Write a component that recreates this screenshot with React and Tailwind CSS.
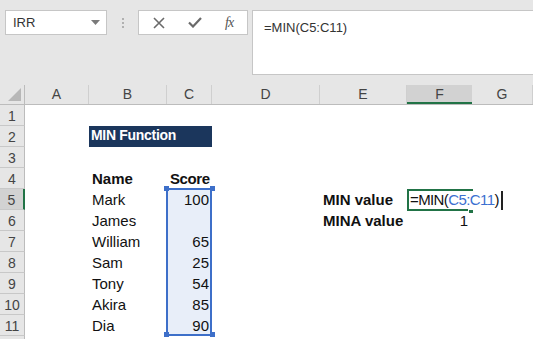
import React from "react";

const rows = [
  { n: 1 },
  { n: 2, title: "MIN Function" },
  { n: 3 },
  { n: 4, b: "Name", c: "Score", bold: true },
  { n: 5, b: "Mark", c: "100", e: "MIN value", active: true },
  { n: 6, b: "James", c: "", e: "MINA value", f: "1" },
  { n: 7, b: "William", c: "65" },
  { n: 8, b: "Sam", c: "25" },
  { n: 9, b: "Tony", c: "54" },
  { n: 10, b: "Akira", c: "85" },
  { n: 11, b: "Dia", c: "90" },
  { n: 12, hideLabel: true },
];

function Toolbar() {
  return (
    <div className="h-[85px] bg-[#e6e6e6] relative flex items-start pt-[10px] pl-[5px]">
      {/* name box */}
      <div className="w-[102px] h-[25px] bg-white border border-[#c6c6c6] flex items-center justify-between pl-[7px] pr-[6px]">
        <span className="text-[13px] text-[#333]">IRR</span>
        <svg width="9" height="5" viewBox="0 0 9 5">
          <path d="M0 0h9L4.5 5z" fill="#7a7a7a" />
        </svg>
      </div>
      {/* dots */}
      <div className="w-[31px] h-[25px] flex flex-col items-center justify-center gap-[2px]">
        <div className="w-[2px] h-[2px] bg-[#b0b0b0]" />
        <div className="w-[2px] h-[2px] bg-[#b0b0b0]" />
        <div className="w-[2px] h-[2px] bg-[#b0b0b0]" />
      </div>
      {/* buttons */}
      <div className="w-[110px] h-[25px] bg-white border border-[#c6c6c6] flex items-center pl-[14px] gap-[23px]">
        <svg width="12" height="12" viewBox="0 0 12 12">
          <path d="M1 1l10 10M11 1L1 11" stroke="#6a6a6a" strokeWidth="1.6" />
        </svg>
        <svg width="14" height="11" viewBox="0 0 14 11">
          <path d="M1 5.5l4 4L13 1" stroke="#6a6a6a" strokeWidth="2.2" fill="none" />
        </svg>
        <span className="text-[14px] italic text-[#555] tracking-[-1px]" style={{ fontFamily: '"Liberation Serif", serif' }}>
          fx
        </span>
      </div>
      {/* formula bar */}
      <div className="ml-[4px] flex-1 h-[65px] bg-white border border-r-0 border-[#c6c6c6] pl-[11px] pt-[4px]">
        <span className="text-[13px] text-[#333]">=MIN(C5:C11)</span>
      </div>
    </div>
  );
}

function ColHeader() {
  const cols = [
    { l: "A", cls: "w-[64px]" },
    { l: "B", cls: "w-[78px]" },
    { l: "C", cls: "w-[45px]" },
    { l: "D", cls: "w-[108px]" },
    { l: "E", cls: "w-[87px]" },
    { l: "F", cls: "w-[65px]", sel: true },
    { l: "G", cls: "flex-1" },
  ];
  return (
    <div className="h-[20px] flex bg-[#e6e6e6] border-b border-[#bcbcbc]">
      <div className="w-[25px] border-r border-[#bcbcbc] flex items-end justify-end pr-[3px] pb-[3px]">
        <svg width="13" height="13" viewBox="0 0 13 13">
          <path d="M13 0v13H0z" fill="#b7b7b7" />
        </svg>
      </div>
      {cols.map((c) => (
        <div
          key={c.l}
          className={`${c.cls} flex items-center justify-center text-[14px] text-[#444] ${
            c.sel ? "bg-[#d2d2d2] border-b-2 border-[#217346] pt-[2px]" : "border-r border-[#cfcfcf]"
          }`}
        >
          {c.l}
        </div>
      ))}
    </div>
  );
}

function SheetRow({ r }) {
  const inRange = r.n >= 5 && r.n <= 11;
  return (
    <div className="h-[21px] flex text-[15px] text-[#111]">
      <div
        className={`w-[25px] shrink-0 border-b border-[#c8c8c8] flex items-center justify-center text-[14px] text-[#444] pt-[3px] ${
          r.active ? "bg-[#d2d2d2] border-r-2 border-r-[#217346]" : "bg-[#e6e6e6] border-r border-r-[#bcbcbc]"
        }`}
      >
        {r.hideLabel ? null : r.n}
      </div>
      <div className="w-[64px] shrink-0" />
      {r.title ? (
        <div className="w-[123px] shrink-0 bg-[#1b365c] text-white font-bold text-[14px] flex items-end pl-[2px] pb-[1px] tracking-[-0.3px]">
          {r.title}
        </div>
      ) : (
        <>
          <div className={`w-[78px] shrink-0 flex items-end pl-[3px] leading-[20px] ${r.bold ? "font-bold" : ""}`}>
            {r.b}
          </div>
          <div
            className={`w-[45px] shrink-0 flex items-end leading-[20px] ${
              r.bold ? "font-bold pl-[3px] tracking-[-0.4px]" : "justify-end pr-[3px]"
            } ${inRange ? "bg-[#e8eef9]" : ""}`}
          >
            {r.c}
          </div>
        </>
      )}
      <div className="w-[108px] shrink-0" />
      <div className="w-[87px] shrink-0 flex items-end pl-[3px] leading-[20px] font-bold whitespace-nowrap">
        {r.e}
      </div>
      <div className="w-[65px] shrink-0 flex items-end justify-end pr-[4px] leading-[20px]">{r.f}</div>
      <div className="flex-1" />
    </div>
  );
}

export default function App() {
  return (
    <div
      className="w-[533px] h-[339px] overflow-hidden bg-white"
      style={{ fontFamily: '"Liberation Sans", Arial, sans-serif' }}
    >
      <Toolbar />
      <ColHeader />
      <div className="relative">
        {rows.map((r) => (
          <SheetRow key={r.n} r={r} />
        ))}

        {/* referenced range C5:C11 */}
        <div className="absolute left-[166px] top-[83px] w-[46px] h-[148px] border-2 border-[#3d6fc9] pointer-events-none" />
        <div className="absolute left-[164px] top-[81px] w-[5px] h-[5px] bg-[#3d6fc9]" />
        <div className="absolute left-[210px] top-[81px] w-[5px] h-[5px] bg-[#3d6fc9]" />
        <div className="absolute left-[164px] top-[227px] w-[5px] h-[5px] bg-[#3d6fc9]" />
        <div className="absolute left-[210px] top-[227px] w-[5px] h-[5px] bg-[#3d6fc9]" />

        {/* active cell F5 in edit mode */}
        <div className="absolute left-[407px] top-[84px] w-[66px] h-[22px] border-t-2 border-l-2 border-b-2 border-[#217346] bg-white" />
        <div className="absolute left-[468px] top-[104px] w-[6px] h-[5px] bg-[#217346] border border-white" />
        <div className="absolute left-[410px] top-[85px] h-[20px] flex items-end leading-[20px] text-[15px] whitespace-nowrap tracking-[-0.6px] text-[#111]">
          <span>=MIN(</span>
          <span className="text-[#3b6fd0]">C5:C11</span>
          <span>)</span>
          <span className="ml-[2px] w-[2px] h-[19px] bg-[#222] self-center" />
        </div>
      </div>
    </div>
  );
}
